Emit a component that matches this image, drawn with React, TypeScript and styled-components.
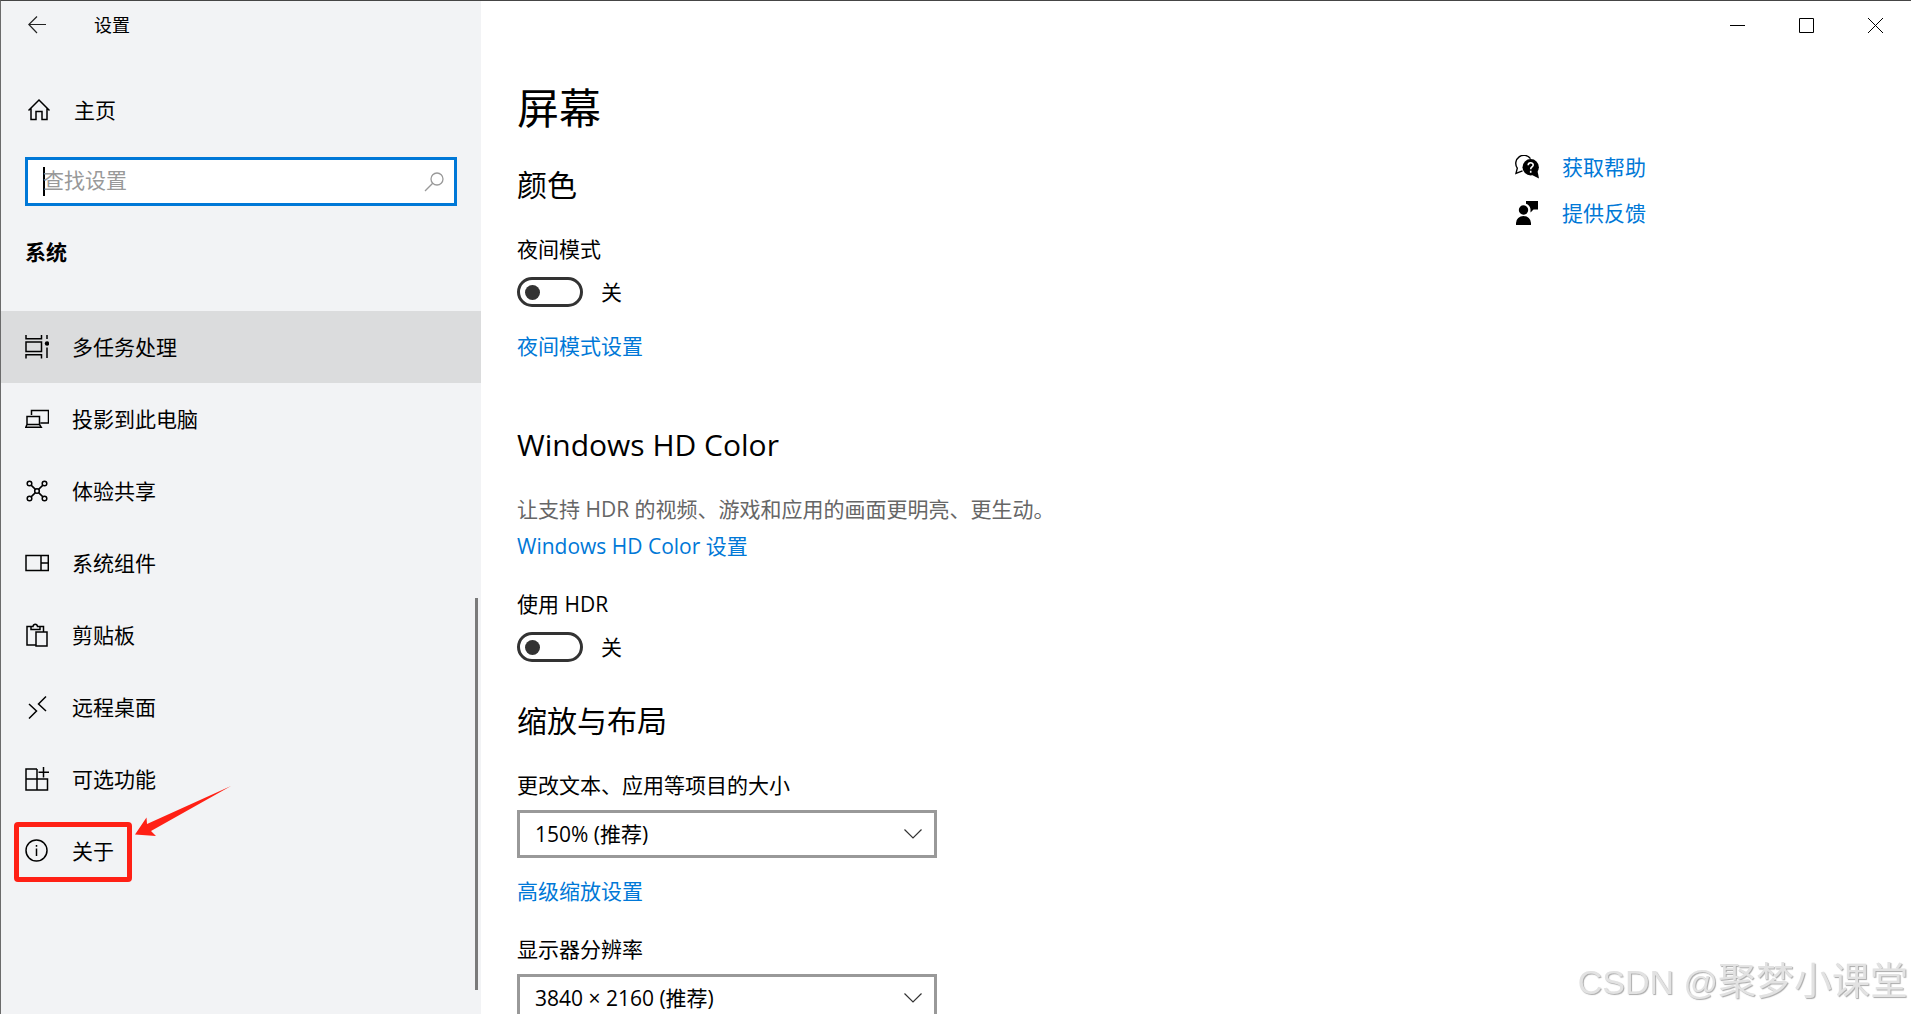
import React from "react";
import styled, { createGlobalStyle } from "styled-components";

const GlobalStyle = createGlobalStyle`
  *, *::before, *::after { box-sizing: border-box; }
  body { margin: 0; overflow: hidden; background: #fff; }
  button, input, select { font: inherit; color: inherit; }
  h1, h2, p { margin: 0; font-weight: inherit; }
`;

const accent = "#0078d7";

const Window = styled.div`
  display: flex;
  height: 100vh;
  overflow: hidden;
  border-top: 1px solid #454545;
  border-left: 1px solid #6b6b6b;
  background: #fff;
  color: #000;
  font-family: "Open Sans", "Noto Sans CJK SC", sans-serif;
  font-size: 21px;
  line-height: 30px;
  font-weight: 400;
`;

const Sidebar = styled.aside`
  position: relative;
  flex: 0 0 480px;
  display: flex;
  flex-direction: column;
  background: #f2f3f5;
`;

const SideTop = styled.header`
  display: flex;
  align-items: center;
  height: 48px;
  font-size: 18px;
`;

const BackButton = styled.button`
  display: flex;
  justify-content: center;
  width: 72px;
  padding: 0;
  border: 0;
  background: none;
`;

const AppName = styled.span`
  margin-left: 21px;
`;

const HomeLink = styled.a`
  display: flex;
  align-items: center;
  gap: 23px;
  height: 72px;
  margin-top: 25px;
  padding-left: 26px;
  color: inherit;
  text-decoration: none;
`;

const SearchBox = styled.label`
  display: flex;
  align-items: center;
  height: 49px;
  margin: 11px 24px 0;
  padding: 0 10px 0 15px;
  border: 3px solid ${accent};
  background: #fff;
`;

const Caret = styled.span`
  width: 2px;
  height: 29px;
  margin-right: -2px;
  background: #000;
`;

const SearchInput = styled.input`
  flex: 1;
  min-width: 0;
  padding: 0 0 3px;
  border: 0;
  outline: 0;
  background: none;
  &::placeholder { color: #999; opacity: 1; }
`;

const GroupTitle = styled.h2`
  margin: 31px 0 44px 24px;
  font-size: 21px;
  line-height: 30px;
  font-weight: 700;
`;

const Nav = styled.nav`
  display: flex;
  flex-direction: column;
`;

const NavItem = styled.a<{ $active?: boolean }>`
  display: flex;
  align-items: center;
  gap: 23px;
  height: 72px;
  padding-left: 24px;
  background: ${(p) => (p.$active ? "#dbdcdd" : "none")};
  color: inherit;
  text-decoration: none;
`;

const ScrollThumb = styled.div`
  position: absolute;
  right: 3px;
  top: 597px;
  bottom: 24px;
  width: 3px;
  background: #7a7a7a;
`;

const Marker = styled.span`
  position: absolute;
  left: 13px;
  top: 821px;
  width: 118px;
  height: 60px;
  border: 5px solid #ff2015;
  border-radius: 4px;
`;

const ArrowMark = styled.svg`
  position: absolute;
  left: 134px;
  top: 784px;
`;

const Main = styled.main`
  flex: 1;
  min-width: 0;
  display: flex;
  flex-direction: column;
`;

const Caption = styled.div`
  flex: none;
  display: flex;
  justify-content: flex-end;
  height: 48px;
  padding-right: 1px;
`;

const CaptionButton = styled.button`
  display: flex;
  align-items: center;
  justify-content: center;
  width: 69px;
  padding: 1px 0 0;
  border: 0;
  background: none;
`;

const Body = styled.div`
  display: flex;
  justify-content: space-between;
  padding: 0 264px 0 36px;
`;

const Content = styled.div`
  display: flex;
  flex-direction: column;
  align-items: flex-start;
  width: 620px;
`;

const PageTitle = styled.h1`
  margin-top: 29px;
  font-size: 42px;
  line-height: 60px;
`;

const SectionTitle = styled.h2<{ $top: number }>`
  margin-top: ${(p) => p.$top}px;
  font-size: 30px;
  line-height: 42px;
`;

const FieldLabel = styled.label<{ $top: number }>`
  margin-top: ${(p) => p.$top}px;
`;

const Description = styled.p`
  margin-top: 28px;
  color: #666;
`;

const TextLink = styled.a<{ $top: number }>`
  margin-top: ${(p) => p.$top}px;
  color: ${accent};
  text-decoration: none;
`;

const ToggleRow = styled.div`
  display: flex;
  align-items: center;
  gap: 18px;
  margin-top: 13px;
`;

const Toggle = styled.input`
  appearance: none;
  display: flex;
  align-items: center;
  width: 66px;
  height: 30px;
  margin: 0;
  padding-left: 5px;
  border: 3px solid #333;
  border-radius: 15px;
  background: #fff;
  &::before {
    content: "";
    width: 15px;
    height: 15px;
    border-radius: 50%;
    background: #333;
  }
`;

const SelectWrap = styled.div`
  display: grid;
  align-items: center;
  width: 420px;
  margin-top: 10px;
  & > * { grid-area: 1 / 1; }
  & > svg { justify-self: end; margin-right: 15px; pointer-events: none; }
`;

const Select = styled.select`
  appearance: none;
  width: 100%;
  height: 48px;
  padding: 0 48px 0 15px;
  border: 3px solid #999;
  border-radius: 0;
  background: #fff;
`;

const HelpLinks = styled.div`
  display: flex;
  flex-direction: column;
  gap: 16px;
  width: 132px;
  margin-top: 103px;
`;

const HelpLink = styled.a`
  display: flex;
  align-items: center;
  gap: 23px;
  color: ${accent};
  text-decoration: none;
  white-space: nowrap;
`;

const Watermark = styled.div`
  position: fixed;
  right: 3px;
  bottom: 4px;
  color: #e2e2e2;
  font-family: "Liberation Sans", "Noto Sans CJK SC", sans-serif;
  font-size: 38px;
  line-height: 56px;
  text-shadow: 1px 1px 1px #aaa;
  white-space: nowrap;
`;

const WatermarkSite = styled.span`
  font-size: 34px;
`;

const Icon = ({ children }: { children: React.ReactNode }) => (
  <svg width="24" height="24" viewBox="0 0 24 24" fill="none" stroke="#000" strokeWidth="1.5" aria-hidden="true">
    {children}
  </svg>
);

const navItems = [
  {
    label: "多任务处理",
    icon: (
      <>
        <path d="M1 0v3.800h15.500V0M1 23.500v-3.800h15.500v3.800M1 7h15.500v9.500H1zM22 0v4M22 12.500v10.500" />
        <circle cx="22" cy="8.500" r="2.200" fill="#000" stroke="none" />
      </>
    ),
  },
  { label: "投影到此电脑", icon: <path d="M6.500 8V3.500h17v12.500h-8M2 9.500h12.500v8H2zM2 17.500L.8 20.200h15.400L14.500 17.500" /> },
  {
    label: "体验共享",
    icon: (
      <>
        <circle cx="4.500" cy="4.500" r="2.300" /><circle cx="19.500" cy="4.500" r="2.300" />
        <circle cx="4.500" cy="19.500" r="2.300" /><circle cx="19.500" cy="19.500" r="2.300" />
        <circle cx="12" cy="12" r="2.300" />
        <path d="M6.100 6.100l4.300 4.300M17.900 6.100l-4.300 4.300M6.100 17.900l4.300-4.300M17.900 17.900l-4.300-4.300" />
      </>
    ),
  },
  { label: "系统组件", icon: <path d="M1 4.500h22.300v15H1zM16 4.500v15M16 12h7" /> },
  {
    label: "剪贴板",
    icon: <path d="M10.500 22H2V3.500h4M15 3.500h3.500V9M6 6.500v-3h2c.5-3 4-3 4.500 0h2.500v3zM11 9H22v14H11z" />,
  },
  { label: "远程桌面", icon: <path d="M4 9l7.500 7L4 23.500M21 1.500L13.500 9l7.500 7" /> },
  { label: "可选功能", icon: <path d="M12 2H1v21h21.500V12H1M12 2v21M18.500 0v10.500M13.500 5.200h10.500" /> },
  {
    label: "关于",
    icon: (
      <>
        <circle cx="11.500" cy="11.500" r="10.500" />
        <path d="M11.500 9.500v7.500M11.500 6v1.800" />
      </>
    ),
  },
];

const Chevron = () => (
  <svg width="18" height="10" viewBox="0 0 18 10" fill="none" stroke="#333" strokeWidth="1.2" aria-hidden="true">
    <path d="M.5.500l8.500 8.500L17.500.500" />
  </svg>
);

const ToggleField = ({ id, label, top }: { id: string; label: string; top: number }) => (
  <>
    <FieldLabel htmlFor={id} $top={top}>{label}</FieldLabel>
    <ToggleRow>
      <Toggle type="checkbox" role="switch" id={id} />
      <span>关</span>
    </ToggleRow>
  </>
);

const SelectField = ({ id, label, value, top }: { id: string; label: string; value: string; top: number }) => (
  <>
    <FieldLabel htmlFor={id} $top={top}>{label}</FieldLabel>
    <SelectWrap>
      <Select id={id}><option>{value}</option></Select>
      <Chevron />
    </SelectWrap>
  </>
);

export default function App() {
  return (
    <>
      <GlobalStyle />
      <Window>
        <Sidebar>
          <SideTop>
            <BackButton aria-label="返回">
              <svg width="18" height="18" viewBox="0 0 18 18" fill="none" stroke="#222" strokeWidth="1.200">
                <path d="M18 8.500H1M9 .5L.8 8.500 9 17" />
              </svg>
            </BackButton>
            <AppName>设置</AppName>
          </SideTop>
          <HomeLink href="#home">
            <Icon><path d="M1.500 12.500L12 2l10.500 10.500M4 10.500V21.500h5v-8h6v8h5V10.500" /></Icon>
            主页
          </HomeLink>
          <SearchBox>
            <Caret />
            <SearchInput type="text" placeholder="查找设置" aria-label="查找设置" />
            <svg width="20" height="20" viewBox="0 0 20 20" fill="none" stroke="#999" strokeWidth="1.300" aria-hidden="true">
              <circle cx="13" cy="7" r="6" /><path d="M8.700 11.300L1 19" />
            </svg>
          </SearchBox>
          <GroupTitle>系统</GroupTitle>
          <Nav>
            {navItems.map((item, i) => (
              <NavItem key={item.label} href={`#item-${i}`} $active={i === 0}>
                <Icon>{item.icon}</Icon>
                {item.label}
              </NavItem>
            ))}
          </Nav>
          <ScrollThumb />
          <Marker />
          <ArrowMark width="98" height="52" viewBox="0 0 98 52" aria-hidden="true">
            <path d="M96 1L12 39 11.500 32.500 0 49.500 21 51 16 46z" fill="#ff2015" />
          </ArrowMark>
        </Sidebar>
        <Main>
          <Caption>
            <CaptionButton aria-label="最小化">
              <svg width="15" height="15" viewBox="0 0 15 15"><path d="M0 7.500h15" stroke="#000" /></svg>
            </CaptionButton>
            <CaptionButton aria-label="最大化">
              <svg width="15" height="15" viewBox="0 0 15 15"><path d="M.5.500h14v14H.5z" stroke="#000" fill="none" /></svg>
            </CaptionButton>
            <CaptionButton aria-label="关闭">
              <svg width="15" height="15" viewBox="0 0 15 15"><path d="M0 0l15 15M15 0L0 15" stroke="#000" /></svg>
            </CaptionButton>
          </Caption>
          <Body>
            <Content>
              <PageTitle>屏幕</PageTitle>
              <SectionTitle $top={26}>颜色</SectionTitle>
              <ToggleField id="night" label="夜间模式" top={28} />
              <TextLink href="#night" $top={24}>夜间模式设置</TextLink>
              <SectionTitle $top={63}>Windows HD Color</SectionTitle>
              <Description>让支持 HDR 的视频、游戏和应用的画面更明亮、更生动。</Description>
              <TextLink href="#hd" $top={7}>Windows HD Color 设置</TextLink>
              <ToggleField id="hdr" label="使用 HDR" top={28} />
              <SectionTitle $top={38}>缩放与布局</SectionTitle>
              <SelectField id="scale" label="更改文本、应用等项目的大小" value="150% (推荐)" top={28} />
              <TextLink href="#scaling" $top={18}>高级缩放设置</TextLink>
              <SelectField id="resolution" label="显示器分辨率" value="3840 × 2160 (推荐)" top={28} />
            </Content>
            <HelpLinks>
              <HelpLink href="#help">
                <svg width="24" height="24" viewBox="0 0 24 24" aria-hidden="true">
                  <path d="M15.500 3.700A7.500 7.500 0 1 0 2.300 13.200L1 18.300 7.500 15.800" fill="none" stroke="#000" strokeWidth="1.400" />
                  <circle cx="15.700" cy="12.300" r="8.200" />
                  <path d="M22.500 16l1.500 7.500-7-3.500z" />
                  <path d="M13.200 10.200c0-3.300 5-3.200 5-.2 0 2-2.500 2-2.500 4.200M15.700 15.800v2" fill="none" stroke="#fff" strokeWidth="1.600" />
                </svg>
                获取帮助
              </HelpLink>
              <HelpLink href="#feedback">
                <svg width="24" height="24" viewBox="0 0 24 24" aria-hidden="true">
                  <circle cx="8.500" cy="9" r="4.700" />
                  <path d="M1 24v-2a7.500 7 0 0 1 15 0v2zM11 0h12v8.500h-4.500L15.500 11.500V8C15 5.500 13.500 3.500 11 2.800z" />
                </svg>
                提供反馈
              </HelpLink>
            </HelpLinks>
          </Body>
        </Main>
      </Window>
      <Watermark><WatermarkSite>CSDN @</WatermarkSite>聚梦小课堂</Watermark>
    </>
  );
}
